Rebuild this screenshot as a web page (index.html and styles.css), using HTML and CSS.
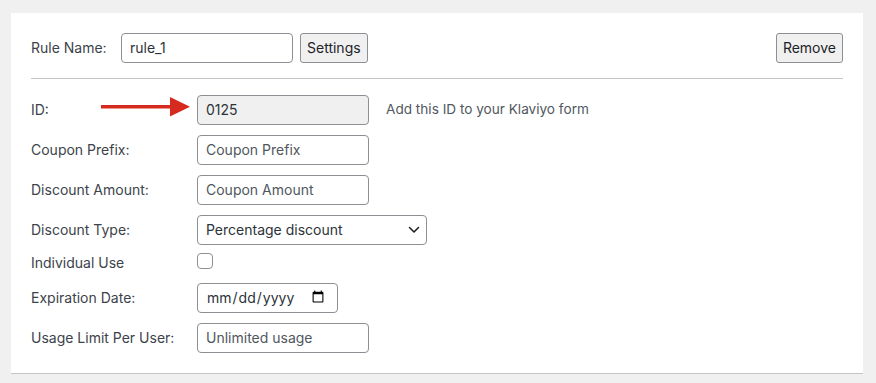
FILE: index.html
```html
<!DOCTYPE html>
<html lang="en">
  <head>
    <meta charset="UTF-8" />
    <meta name="viewport" content="width=device-width, initial-scale=1.0" />
    <title>Coupon Rule</title>
    <link rel="stylesheet" href="styles.css">
  </head>
  <body>
    <div class="rule-card">
      <div class="rule-header">
        <label class="rule-label" for="ruleName">Rule Name:</label>
        <input class="field rule-name" id="ruleName" value="rule_1" />
        <button class="btn">Settings</button>
        <button class="btn btn-remove">Remove</button>
      </div>

      <div class="rule-fields">
        <div class="field-row">
          <label class="field-label">ID:</label>
          <div class="field-wrap">
            <input class="field field-readonly" value="0125" readonly />
            <span class="field-hint">Add this ID to your Klaviyo form</span>
          </div>
          <svg class="pointer" width="89" height="20" viewBox="0 0 89 20">
            <rect x="0" y="8" width="71" height="3.5" fill="#d62a1e"/>
            <polygon points="69,0 89,9.7 69,19.5" fill="#d62a1e"/>
          </svg>
        </div>
        <div class="field-row">
          <label class="field-label">Coupon Prefix:</label>
          <input class="field" placeholder="Coupon Prefix" />
        </div>
        <div class="field-row">
          <label class="field-label">Discount Amount:</label>
          <input class="field" placeholder="Coupon Amount" />
        </div>
        <div class="field-row">
          <label class="field-label">Discount Type:</label>
          <div class="select-wrap">
            <select class="field field-select">
              <option>Percentage discount</option>
              <option>Fixed cart discount</option>
            </select>
            <svg class="select-arrow" width="12" height="8" viewBox="0 0 12 8">
              <path d="M1.5 1.5 6 6l4.5-4.5" fill="none" stroke="#1d2327" stroke-width="1.6" stroke-linecap="round" stroke-linejoin="round"/>
            </svg>
          </div>
        </div>
        <div class="field-row row-short">
          <label class="field-label">Individual Use</label>
          <input type="checkbox" class="check" />
        </div>
        <div class="field-row">
          <label class="field-label">Expiration Date:</label>
          <input type="date" class="field field-date" />
        </div>
        <div class="field-row">
          <label class="field-label">Usage Limit Per User:</label>
          <input class="field" placeholder="Unlimited usage" />
        </div>
      </div>
    </div>
  </body>
</html>
```

FILE: styles.css
```css
body {
  margin: 0;
  padding: 13px 13px 0 11px;
  background-color: #f0f0f1;
  font-family: "Inter", "Noto Sans", sans-serif;
  font-size: 14px;
  color: #3c434a;
}
.rule-card {
  background-color: white;
  border-bottom: 1px solid #c3c4c7;
  padding: 20px 20px 20px 20px;
}
.rule-header {
  display: flex;
  align-items: center;
  gap: 7px;
  padding-bottom: 15px;
  border-bottom: 1px solid #c3c4c7;
}
.rule-label {
  width: 83px;
  padding-bottom: 2px;
  color: #3c434a;
}
.field {
  box-sizing: border-box;
  width: 172px;
  height: 30px;
  padding: 0 8px 2px 8px;
  border: 1px solid #8c8f94;
  border-radius: 4px;
  background-color: white;
  font-family: inherit;
  font-size: 14px;
  color: #2c3338;
  outline: none;
  margin: 0;
}
.field::placeholder {
  color: #50575e;
}
.rule-name {
  width: 172px;
}
.btn {
  height: 30px;
  padding: 0 6px 2px 6px;
  border: 1px solid #8c8f94;
  border-radius: 3px;
  background-color: #f0f0f0;
  font-family: inherit;
  font-size: 14px;
  color: #1d2327;
  cursor: pointer;
}
.btn-remove {
  margin-left: auto;
}
.rule-fields {
  display: flex;
  flex-direction: column;
  gap: 10px;
  padding-top: 16px;
}
.field-row {
  display: grid;
  grid-template-columns: 166px auto;
  align-items: center;
  min-height: 30px;
  position: relative;
}
.row-short {
  min-height: 20px;
  margin-top: -2px;
}
.field-label {
  padding-bottom: 2px;
  color: #3c434a;
}
.field-wrap {
  display: flex;
  align-items: center;
  gap: 17px;
}
.field-readonly {
  background-color: #f0f0f1;
}
.field-hint {
  padding-bottom: 2px;
  font-size: 13.6px;
  color: #50575e;
}
.pointer {
  position: absolute;
  left: 70px;
  top: 2px;
}
.select-wrap {
  position: relative;
  width: 230px;
}
.field-select {
  width: 230px;
  appearance: none;
  -webkit-appearance: none;
  padding-right: 28px;
  color: #2c3338;
}
.select-arrow {
  position: absolute;
  right: 7px;
  top: 11px;
  pointer-events: none;
}
.check {
  appearance: none;
  -webkit-appearance: none;
  box-sizing: border-box;
  align-self: start;
  width: 16px;
  height: 16px;
  margin: 0;
  border: 1px solid #8c8f94;
  border-radius: 4px;
  background-color: white;
}
.field-date {
  width: 141px;
  padding-right: 10px;
}
```
